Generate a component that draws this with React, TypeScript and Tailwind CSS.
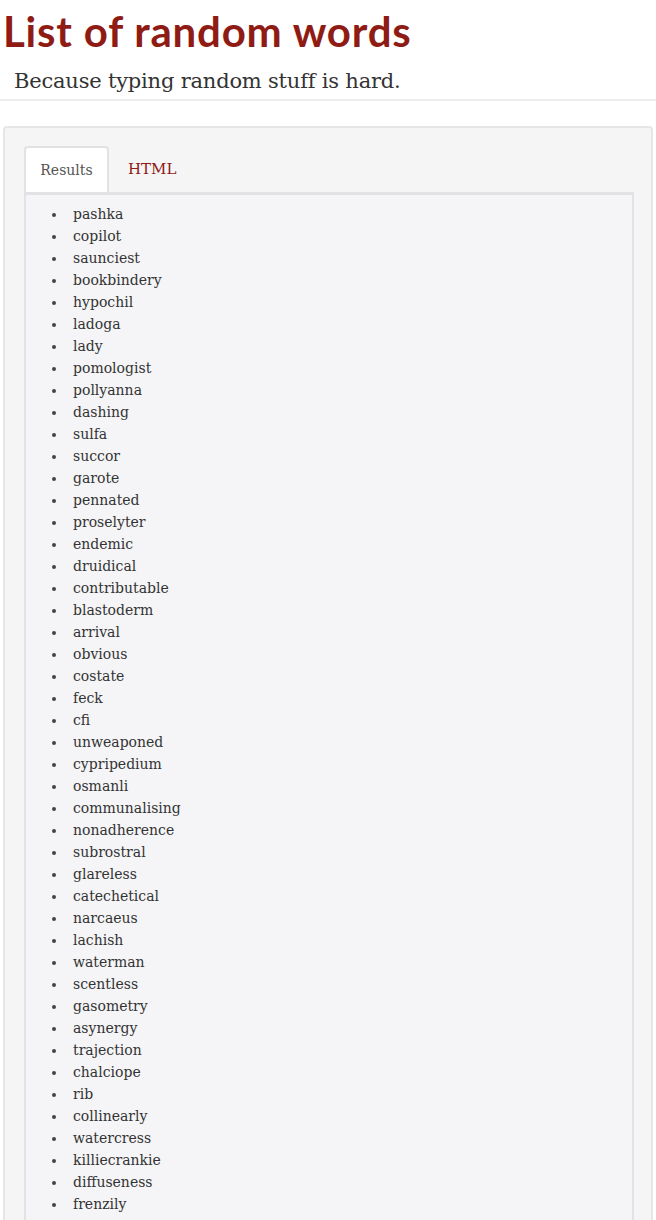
import React from "react";

const words = [
  "pashka","copilot","saunciest","bookbindery","hypochil","ladoga","lady","pomologist","pollyanna","dashing",
  "sulfa","succor","garote","pennated","proselyter","endemic","druidical","contributable","blastoderm","arrival",
  "obvious","costate","feck","cfi","unweaponed","cypripedium","osmanli","communalising","nonadherence","subrostral",
  "glareless","catechetical","narcaeus","lachish","waterman","scentless","gasometry","asynergy","trajection","chalciope",
  "rib","collinearly","watercress","killiecrankie","diffuseness","frenzily","boldness","unclad","tremor","quipster",
];

export default function App() {
  return (
    <div className="w-[656px] bg-white min-h-[1220px]">
      <h1 className="pl-[3px] pt-[4px] text-[42px] leading-[54px] font-bold text-[#8f1b15] font-['Lato','Liberation_Sans',sans-serif] tracking-[0.8px]">
        List of random words
      </h1>
      <p className="pl-[14px] pt-[10px] pb-[5px] text-[21px] leading-[26px] tracking-[-0.2px] text-[#333] font-['DejaVu_Serif',serif] border-b-2 border-[#ececec]">
        Because typing random stuff is hard.
      </p>
      <div className="mx-[3px] mt-[25px] rounded-[4px] border-2 border-[#e6e6e6] bg-[#f5f5f5] pl-[19px] pr-[17px] pt-[18px]">
        <div className="flex items-end border-b-[3px] border-[#e2e2e4]">
          <div className="w-[85px] h-[46px] rounded-t-[4px] border-2 border-b-0 border-[#e2e2e2] bg-white flex items-center justify-center text-[14px] text-[#555] font-['DejaVu_Serif',serif]">
            Results
          </div>
          <div className="h-[46px] pl-[19px] flex items-center text-[15px] text-[#8f1b15] font-['DejaVu_Serif',serif]">
            HTML
          </div>
        </div>
        <div className="border-x-2 border-[#e2e2e6] bg-[#f5f5f7] pt-[8px] pb-4">
          <ul className="list-none pl-[26px] text-[14px] leading-[22px] text-[#333] font-['DejaVu_Serif',serif]">
            {words.map((x, i) => (
              <li key={i} className="flex items-center">
                <span className="w-[4px] h-[4px] rounded-full bg-[#444] mt-[2px]" />
                <span className="ml-[17px]">{x}</span>
              </li>
            ))}
          </ul>
        </div>
      </div>
    </div>
  );
}
